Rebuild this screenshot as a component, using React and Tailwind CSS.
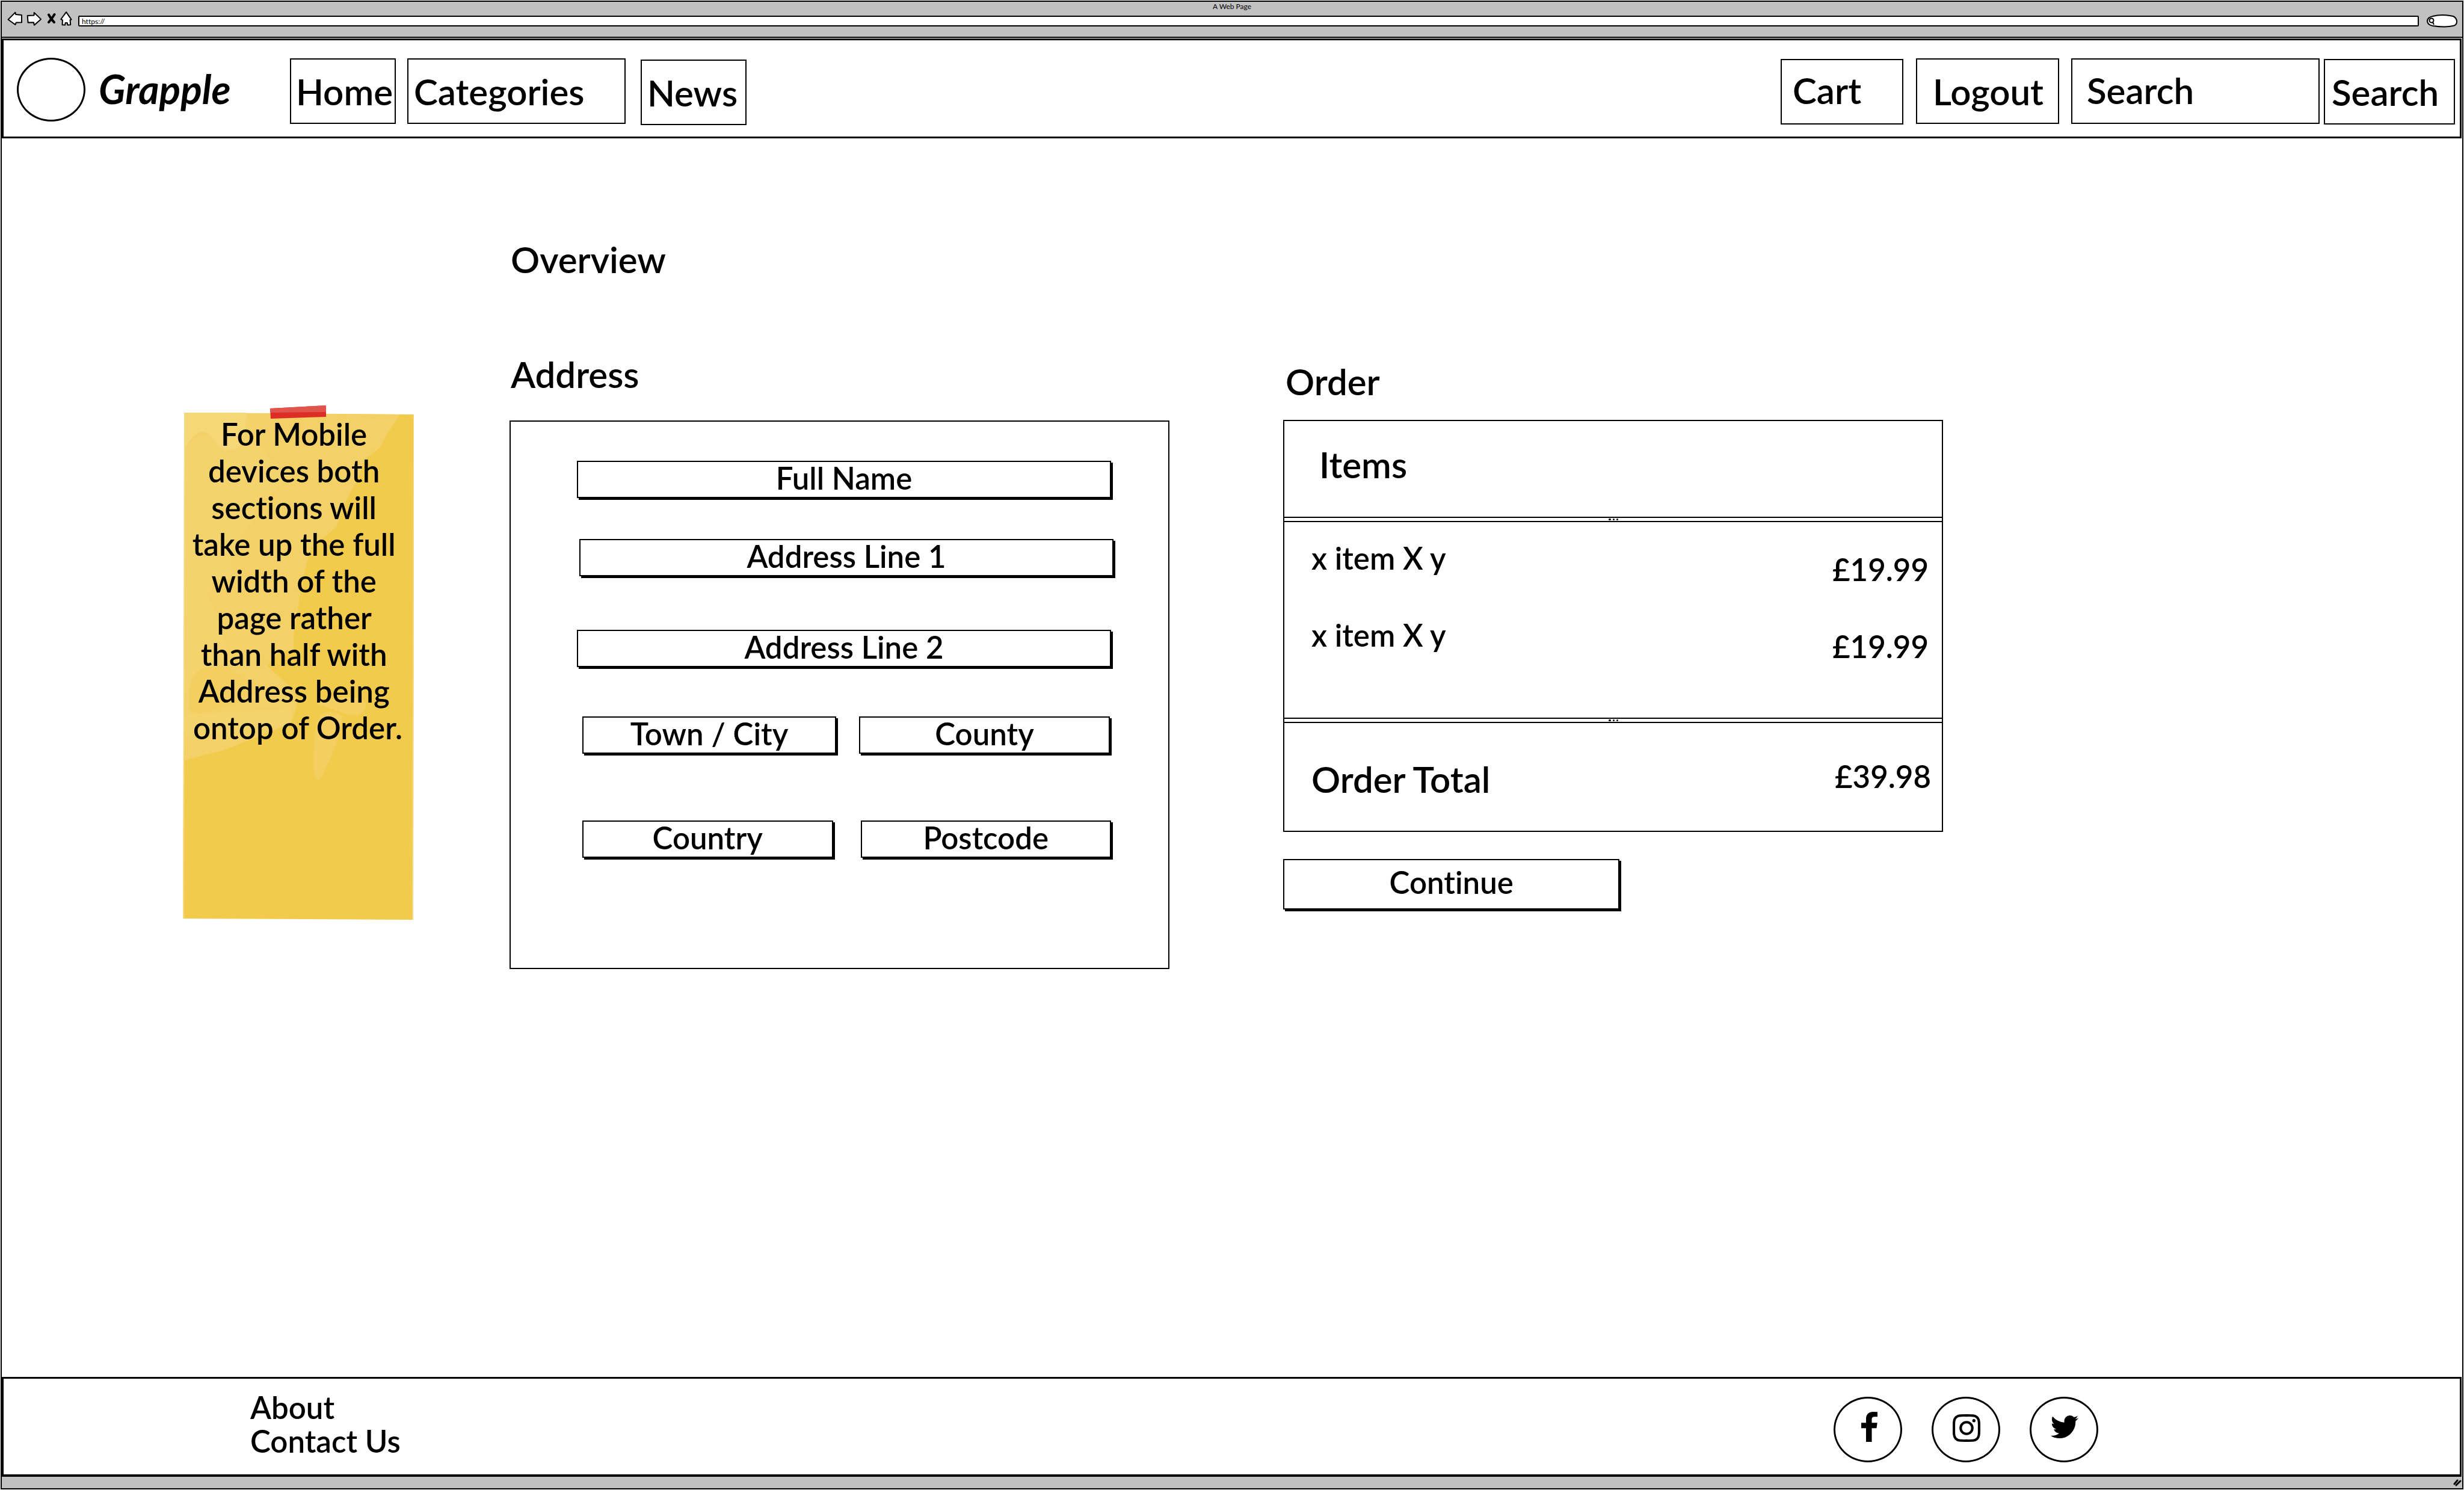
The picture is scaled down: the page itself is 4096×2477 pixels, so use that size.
const navBox =
  "border-2 border-black bg-white text-left text-[60px] leading-[72px] h-[109px] whitespace-nowrap";
const raised =
  "border-2 border-black bg-white shadow-[3px_3px_0_0_#000] text-[51px] leading-[60px] text-center placeholder:text-black placeholder:opacity-100";

function Arrow({ className, d, box }) {
  return (
    <svg viewBox={box} className={className} fill="#fff" stroke="#000" strokeWidth="2" strokeLinejoin="round" aria-hidden="true">
      <path d={d} />
    </svg>
  );
}

function BrowserBar() {
  return (
    <div className="relative flex h-[58px] items-start bg-[#c1c1c1] pt-[16px] pl-[9px]">
      <span className="absolute inset-x-0 top-0 text-center text-[12px] leading-[16px] font-normal">A Web Page</span>
      <button aria-label="Back" className="h-6 w-[25px]">
        <Arrow box="0 0 25 24" className="h-6 w-[25px]" d="M1.600 13.500 13.400 1.600 14.200 5 23.900 5.900 24.100 18.300 14.800 18.600 13.400 22z" />
      </button>
      <button aria-label="Forward" className="ml-[7px] h-6 w-[25px]">
        <Arrow box="0 0 25 24" className="h-6 w-[25px]" d="M1.700 7 12.500 6.400 12.700 1.900 24 12.900 13 22.800 11.900 18.300 2.600 18.600z" />
      </button>
      <button aria-label="Stop" className="ml-[8px] h-6 w-[17px]">
        <svg viewBox="0 0 17 24" className="h-6 w-[17px]" fill="none" stroke="#000" strokeWidth="4" strokeLinecap="round" aria-hidden="true">
          <path d="M4 5.500Q8 13 13 18M13.500 5Q10 11 4 18" />
        </svg>
      </button>
      <button aria-label="Home page" className="ml-[5px] h-6 w-[22px]">
        <Arrow
          box="0 0 22 24"
          className="h-6 w-[22px]"
          d="M11.100 1.100 19.600 13.500 17.600 14.300 18.200 22.200 13.400 22.500 12.800 18.900H9.700L9.100 22.500 4.600 22.200 4.900 14.300 2.300 13z"
        />
      </button>
      <input
        aria-label="Page address"
        defaultValue="https://"
        className="ml-[9px] mt-[7px] h-[18px] min-w-0 flex-1 rounded-[2px] border-2 border-black bg-white px-1 text-[12px] leading-[14px] font-normal"
      />
      <button aria-label="Find" className="ml-[13px] mr-[8px] mt-[5px] h-[22px] w-[51px]">
        <svg viewBox="0 0 51 22" className="h-[22px] w-[51px]" fill="#fff" stroke="#000" strokeWidth="2" aria-hidden="true">
          <path d="M10 3Q25-1 44 3 50 6 50 12T44 19Q30 22 10 19 1 17 1 11T10 3z" />
          <circle cx="8" cy="10" r="3.500" />
          <path d="m10 13 2 4" />
        </svg>
      </button>
    </div>
  );
}

function Header() {
  return (
    <header className="mr-px mt-[3px] flex h-[166px] items-start border-[3px] border-black bg-white pt-[30px]">
      <div className="ml-[22px] -mt-px h-[106px] w-[114px] rounded-[50%] border-[3px] border-black" />
      <h1 className="ml-[22px] w-[222px] pt-[13px] text-[66px] leading-[76px] font-bold italic">Grapple</h1>
      <nav className="flex flex-1 items-start pl-[96px]">
        <button className={`${navBox} w-[176px] px-[8px]`}>Home</button>
        <button className={`${navBox} ml-[19px] w-[363px] px-[9px]`}>Categories</button>
        <button className={`${navBox} ml-[25px] mt-[2px] w-[176px] px-[9px]`}>News</button>
      </nav>
      <div className="mr-[8px] flex items-start">
        <button className={`${navBox} mt-px w-[204px] pb-[6px] pl-[18px]`}>Cart</button>
        <button className={`${navBox} ml-[21px] w-[238px] pl-[26px]`}>Logout</button>
        <input
          aria-label="Search"
          placeholder="Search"
          className={`${navBox} ml-[20px] w-[413px] pb-[4px] pl-[24px] placeholder:text-black placeholder:opacity-100`}
        />
        <button className={`${navBox} ml-[7px] mt-px w-[218px] pl-[11px]`}>Search</button>
      </div>
    </header>
  );
}

const noteLines = [
  "For Mobile ",
  "devices both ",
  "sections will ",
  "take up the full ",
  "width of the ",
  "page rather ",
  "than half with ",
  "Address being ",
  "ontop of Order.",
];

function Note() {
  return (
    <aside className="relative mt-[456px] h-[843px] self-start">
      <svg viewBox="0 0 384 843" preserveAspectRatio="none" className="absolute inset-0 h-full w-full" aria-hidden="true">
        <path d="M3 0 384 3 382 843 0 841z" fill="#f2ca4c" />
        <path d="M3 0 361 3 334 45Q333 58 303 76L291 110 272 145 255 190Q240 205 218 216 205 240 193 315L184 370V394Q150 396 141 422L182 459 191 479 187 495Q182 510 178 518L68 561 3 578z" fill="#f3d166" />
        <path d="M3 60Q35 20 62 48T104 1H108Q112 45 150 78 170 90 163 117 145 142 130 145 115 170 114 185 88 210 80 240V275Q40 292 41 305L64 350Q75 385 69 417 20 430 9 475V500Q100 500 180 490L182 505 178 518 3 540z" fill="#f4d26c" />
        <path d="M3 0H105Q107 40 90 60 70 68 55 50 30 10 3 60z" fill="#f6d778" />
        <path d="M9 478Q12 425 40 424L72 418Q110 455 138 452 110 480 70 487 20 510 9 490z" fill="#f3ce60" />
        <path d="M218 560Q219 500 238 498 250 495 265 505 264 535 238 590 225 625 218 600 215 580 218 560z" fill="#f3ce60" />
        <path d="M220 484Q290 462 305 485 300 510 270 500z" fill="#f4cf62" />
        <path d="M3 0 1 841M384 3 382 843" stroke="#f5da86" strokeWidth="2" />
      </svg>
      <svg viewBox="0 0 96 24" className="absolute left-[144px] top-[-13px] h-6 w-24" aria-hidden="true">
        <path d="M1 6 94 1V20L2 23z" fill="#dc2e25" />
        <path d="M1 6 94 1V12L1 13z" fill="#e1544c" />
      </svg>
      <p className="relative pt-[5px] pr-[2px] text-center text-[51px] leading-[61px]">
        {noteLines.map((line) => (
          <span key={line} className="block whitespace-pre">
            {line}
          </span>
        ))}
      </p>
    </aside>
  );
}

function AddressForm() {
  return (
    <section className="flex flex-col">
      <h2 className="mt-[165px] pl-[2px] text-[60px] leading-[72px]">Overview</h2>
      <h3 className="mt-[119px] pl-[2px] text-[60px] leading-[72px]">Address</h3>
      <form className="mt-[41px] flex h-[912px] flex-col border-2 border-black pl-[110px] pr-[95px] pt-[65px]">
        <input aria-label="Full Name" placeholder="Full Name" className={`${raised} h-[62px] pb-[6px]`} />
        <input aria-label="Address Line 1" placeholder="Address Line 1" className={`${raised} -mr-1 ml-1 mt-[68px] h-[62px] pb-[6px]`} />
        <input aria-label="Address Line 2" placeholder="Address Line 2" className={`${raised} mt-[89px] h-[62px] pb-[6px]`} />
        <div className="mt-[82px] grid grid-cols-[421fr_416fr] gap-x-[38px] pl-[9px] pr-[2px]">
          <input aria-label="Town / City" placeholder="Town / City" className={`${raised} h-[62px] min-w-0 pb-[6px]`} />
          <input aria-label="County" placeholder="County" className={`${raised} h-[62px] min-w-0 pb-[6px]`} />
        </div>
        <div className="mt-[111px] grid grid-cols-2 gap-x-[46px] pl-[9px]">
          <input aria-label="Country" placeholder="Country" className={`${raised} h-[62px] min-w-0 pb-[6px]`} />
          <input aria-label="Postcode" placeholder="Postcode" className={`${raised} h-[62px] min-w-0 pb-[6px]`} />
        </div>
      </form>
    </section>
  );
}

function Divider() {
  return (
    <div className="flex h-[9px] items-center justify-center gap-[3px] border-y-2 border-black">
      <span className="h-[3px] w-[4px] rounded-full bg-black" />
      <span className="h-[3px] w-[3px] rounded-full bg-black" />
      <span className="h-[3px] w-[3px] rounded-full bg-black" />
    </div>
  );
}

const items = [
  { name: "x item X y", price: "£19.99" },
  { name: "x item X y", price: "£19.99" },
];

function Order() {
  return (
    <section>
      <h3 className="mt-[368px] pl-1 text-[60px] leading-[72px]">Order</h3>
      <div className="mt-[28px] border-2 border-black">
        <h4 className="pb-[51px] pl-[58px] pt-[36px] text-[60px] leading-[72px]">Items</h4>
        <Divider />
        <ul className="flex flex-col gap-[49px] pb-[88px] pl-[45px] pr-[22px] pt-[30px] text-[51px] leading-[60px]">
          {items.map((item, i) => (
            <li key={i} className="flex justify-between">
              <span>{item.name}</span>
              <span className="pt-[19px]">{item.price}</span>
            </li>
          ))}
        </ul>
        <Divider />
        <div className="flex items-start justify-between pb-[50px] pl-[45px] pr-[18px] pt-[57px]">
          <span className="text-[60px] leading-[72px]">Order Total</span>
          <span className="pt-[2px] text-[51px] leading-[60px]">£39.98</span>
        </div>
      </div>
      <button className={`${raised} mt-[45px] h-[84px] w-[51%] pb-[6px]`}>Continue</button>
    </section>
  );
}

const social = [
  {
    name: "Facebook",
    box: "479 0 864 1664",
    size: "h-[50px] w-[27px]",
    pad: "mt-[22px] ml-[43px]",
    d: "M1343 12v264h-157q-86 0-116 36t-30 108v189h293l-39 296h-254v759h-306v-759h-255v-296h255v-218q0-186 104-288.500t277-102.500q147 0 228 12z",
  },
  {
    name: "Instagram",
    box: "128 128 1536 1536",
    size: "h-[46px] w-[46px]",
    pad: "mt-[26px] ml-[32px]",
    d: "M1152 896q0-106-75-181t-181-75-181 75-75 181 75 181 181 75 181-75 75-181zm138 0q0 164-115 279t-279 115-279-115-115-279 115-279 279-115 279 115 115 279zm108-410q0 38-27 65t-65 27-65-27-27-65 27-65 65-27 65 27 27 65zm-502-220q-7 0-76.500-.5t-105.500 0-96.500 3-103 10-71.500 18.500q-50 20-88 58t-58 88q-11 29-18.500 71.500t-10 103-3 96.500 0 105.500.5 76.500-.5 76.500 0 105.500 3 96.500 10 103 18.500 71.500q20 50 58 88t88 58q29 11 71.500 18.500t103 10 96.500 3 105.500 0 76.500-.5 76.500.5 105.500 0 96.500-3 103-10 71.500-18.500q50-20 88-58t58-88q11-29 18.500-71.500t10-103 3-96.500 0-105.500-.5-76.500.5-76.500 0-105.500-3-96.500-10-103-18.500-71.500q-20-50-58-88t-88-58q-29-11-71.500-18.500t-103-10-96.500-3-105.500 0-76.500.5zm768 630q0 229-5 317-10 208-124 322t-322 124q-88 5-317 5t-317-5q-208-10-322-124t-124-322q-5-88-5-317t5-317q10-208 124-322t322-124q88-5 317-5t317 5q208 10 322 124t124 322q5 88 5 317z",
  },
  {
    name: "Twitter",
    box: "108 256 1576 1280",
    size: "h-[38px] w-[46px]",
    pad: "mt-[28px] ml-[32px]",
    d: "M1684 408q-67 98-162 167 1 14 1 42 0 130-38 259.500t-115.500 248.500-184.500 210.500-258 146-323 54.500q-271 0-496-145 35 4 78 4 225 0 401-138-105-2-188-64.500t-114-159.500q33 5 61 5 43 0 85-11-112-23-185.500-111.500t-73.500-205.500v-4q68 38 146 41-66-44-105-115t-39-154q0-88 44-163 121 149 294.500 238.500t371.500 99.500q-8-38-8-74 0-134 94.500-228.500t228.500-94.500q140 0 236 102 109-21 205-78-37 115-142 178 93-10 186-50z",
  },
];

function Footer() {
  return (
    <footer className="mr-px flex h-[166px] items-start border-[3px] border-b-4 border-black bg-white">
      <nav className="ml-[410px] mt-[20px] flex flex-col text-[51px] leading-[56px]">
        <a href="#about">About</a>
        <a href="#contact">Contact Us</a>
      </nav>
      <div className="ml-auto mr-[601px] mt-[30px] flex gap-[49px]">
        {social.map((s) => (
          <a key={s.name} href={`#${s.name}`} aria-label={s.name} className="h-[109px] w-[114px] rounded-[50%] border-[3px] border-black">
            <svg viewBox={s.box} preserveAspectRatio="none" className={`${s.size} ${s.pad}`} fill="#000" aria-hidden="true">
              <path d={s.d} />
            </svg>
          </a>
        ))}
      </div>
    </footer>
  );
}

export default function App() {
  return (
    <div className="min-h-screen bg-white p-px font-['Lato','Open_Sans',sans-serif] font-semibold text-black [font-variant-ligatures:none]">
      <div className="flex min-h-[calc(100vh-2px)] flex-col border-2 border-black">
        <BrowserBar />
        <div className="-mb-[2px] h-[2px] bg-black" />
        <Header />
        <main className="grid flex-1 grid-cols-[301fr_384fr_159fr_1097fr_189fr_1097fr_863fr] [&>*:nth-child(1)]:col-start-2 [&>*:nth-child(2)]:col-start-4 [&>*:nth-child(3)]:col-start-6">
          <Note />
          <AddressForm />
          <Order />
        </main>
        <Footer />
        <div className="flex h-[19px] items-end justify-end bg-[#c1c1c1] pb-[3px] pr-px">
          <svg viewBox="0 0 14 12" className="h-3 w-[14px]" stroke="#000" strokeWidth="3" strokeLinecap="round" aria-hidden="true">
            <path d="M2 8 7 2M5 10l7-7" />
          </svg>
        </div>
      </div>
    </div>
  );
}
